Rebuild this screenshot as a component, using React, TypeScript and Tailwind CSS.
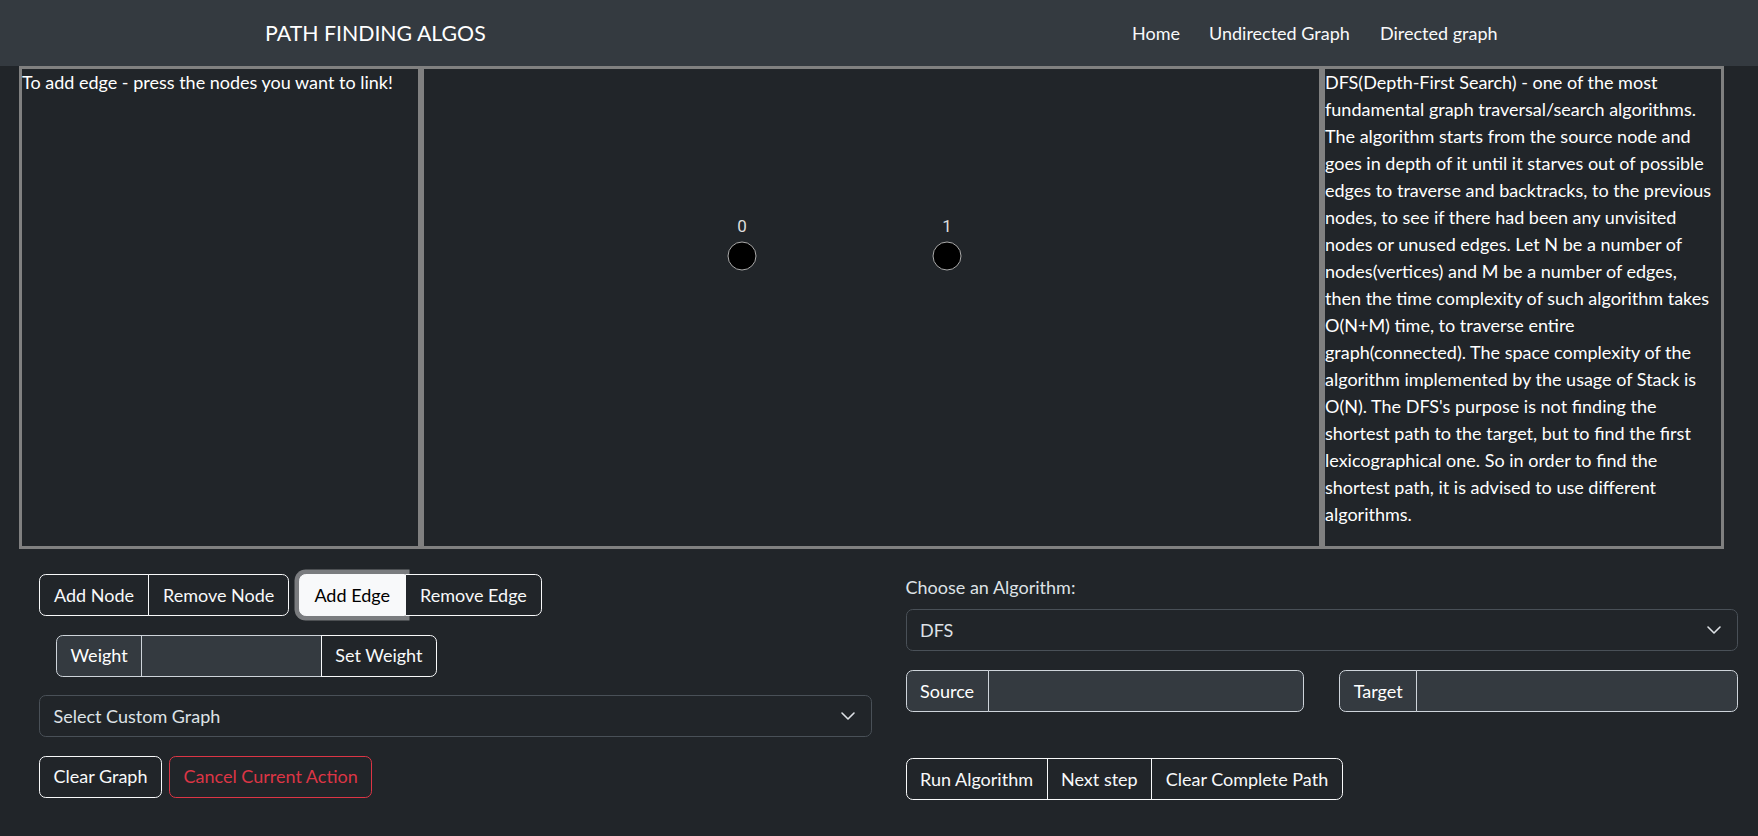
import React from "react";

const dfsLines = [
  "DFS(Depth-First Search) - one of the most",
  "fundamental graph traversal/search algorithms.",
  "The algorithm starts from the source node and",
  "goes in depth of it until it starves out of possible",
  "edges to traverse and backtracks, to the previous",
  "nodes, to see if there had been any unvisited",
  "nodes or unused edges. Let N be a number of",
  "nodes(vertices) and M be a number of edges,",
  "then the time complexity of such algorithm takes",
  "O(N+M) time, to traverse entire",
  "graph(connected). The space complexity of the",
  "algorithm implemented by the usage of Stack is",
  "O(N). The DFS's purpose is not finding the",
  "shortest path to the target, but to find the first",
  "lexicographical one. So in order to find the",
  "shortest path, it is advised to use different",
  "algorithms.",
];

const nodes = [
  { id: 0, x: 318, y: 187 },
  { id: 1, x: 523, y: 187 },
];

function Chevron() {
  return (
    <svg width="16" height="16" viewBox="0 0 16 16" fill="none">
      <path d="M2 5l6 6 6-6" stroke="#dee2e6" strokeWidth="1.6" strokeLinecap="round" strokeLinejoin="round" />
    </svg>
  );
}

function Select({ label }: { label: string }) {
  return (
    <div className="h-[42px] w-full flex items-center justify-between pl-[13.5px] pr-[15px] border border-[#495057] rounded-[6.75px] bg-[#212529] text-[#dee2e6]">
      <span>{label}</span>
      <Chevron />
    </div>
  );
}

function InputGroup({ label, button, className }: { label: string; button?: string; className?: string }) {
  return (
    <div className={"h-[42px] flex " + (className ?? "")}>
      <span className="flex items-center px-[13.5px] bg-[#343a40] border border-[#ced4da] rounded-l-[6.75px]">{label}</span>
      <div className={"flex-1 bg-[#343a40] border border-[#ced4da] -ml-px " + (button ? "" : "rounded-r-[6.75px]")} />
      {button && (
        <button className="flex items-center px-[13.5px] border border-[#f8f9fa] rounded-r-[6.75px] -ml-px text-[#f8f9fa]">{button}</button>
      )}
    </div>
  );
}

export default function App() {
  return (
    <div className="min-h-screen bg-[#212529] text-white font-['Lato',sans-serif] text-[18px] leading-[27px]">
      {/* Navbar */}
      <header className="h-[66px] bg-[#343a40] flex items-center">
        <div className="w-[1132px] pl-[265px] text-[21.3px]">PATH FINDING ALGOS</div>
        <nav className="flex text-[#f8f9fa]">
          <a className="w-[77px]">Home</a>
          <a className="w-[171px]">Undirected Graph</a>
          <a>Directed graph</a>
        </nav>
      </header>

      {/* Panels */}
      <div className="flex ml-[19px] h-[483px]">
        <div className="w-[402px] border-[3px] border-[#808080]">
          To add edge - press the nodes you want to link!
        </div>
        <div className="w-[901px] border-[3px] border-[#808080] relative">
          {nodes.map((n) => (
            <div key={n.id}>
              <span
                className="absolute -translate-x-1/2 text-[17px] leading-[20px] text-[#dddddd] font-['Roboto',sans-serif]"
                style={{ left: n.x, top: n.y - 40 }}
              >
                {n.id}
              </span>
              <span
                className="absolute w-[29px] h-[29px] rounded-full bg-black border border-[#aaaaaa] -translate-x-1/2 -translate-y-1/2"
                style={{ left: n.x, top: n.y }}
              />
            </div>
          ))}
        </div>
        <div className="w-[402px] border-[3px] border-[#808080] whitespace-nowrap">
          {dfsLines.map((l, i) => (
            <div key={i}>{l}</div>
          ))}
        </div>
      </div>

      {/* Controls */}
      <div className="grid grid-cols-2 gap-[34px] pl-[39px] pr-[20px] pt-[25px]">
        <div className="flex flex-col gap-[18.5px]">
          <div className="flex gap-[10px] text-[#f8f9fa]">
            <div className="flex h-[42px]">
              <button className="px-[14px] border border-[#f8f9fa] rounded-l-[6.75px]">Add Node</button>
              <button className="px-[14px] border border-[#f8f9fa] rounded-r-[6.75px] -ml-px">Remove Node</button>
            </div>
            <div className="flex h-[42px]">
              <button className="px-[14px] border border-[#f8f9fa] rounded-l-[6.75px] bg-[#f8f9fa] text-black shadow-[0_0_0_4.5px_rgba(211,212,213,0.5)]">
                Add Edge
              </button>
              <button className="relative z-10 px-[14px] border border-[#f8f9fa] rounded-r-[6.75px] bg-[#212529]">Remove Edge</button>
            </div>
          </div>
          <div className="pl-[17px]">
            <InputGroup label="Weight" button="Set Weight" className="w-[381px]" />
          </div>
          <Select label="Select Custom Graph" />
          <div className="flex gap-[7px] h-[42px]">
            <button className="px-[13.5px] border border-[#f8f9fa] rounded-[6.75px] text-[#f8f9fa]">Clear Graph</button>
            <button className="px-[13.5px] border border-[#dc3545] rounded-[6.75px] text-[#dc3545]">Cancel Current Action</button>
          </div>
        </div>

        <div className="flex flex-col">
          <label className="text-[#dee2e6] mb-[8px]">Choose an Algorithm:</label>
          <Select label="DFS" />
          <div className="grid grid-cols-2 gap-[35px] mt-[19px]">
            <InputGroup label="Source" />
            <InputGroup label="Target" />
          </div>
          <div className="flex h-[42px] mt-[46px] text-[#f8f9fa]">
            <button className="px-[13.5px] border border-[#f8f9fa] rounded-l-[6.75px]">Run Algorithm</button>
            <button className="px-[13.5px] border border-[#f8f9fa] -ml-px">Next step</button>
            <button className="px-[13.5px] border border-[#f8f9fa] rounded-r-[6.75px] -ml-px">Clear Complete Path</button>
          </div>
        </div>
      </div>
    </div>
  );
}
